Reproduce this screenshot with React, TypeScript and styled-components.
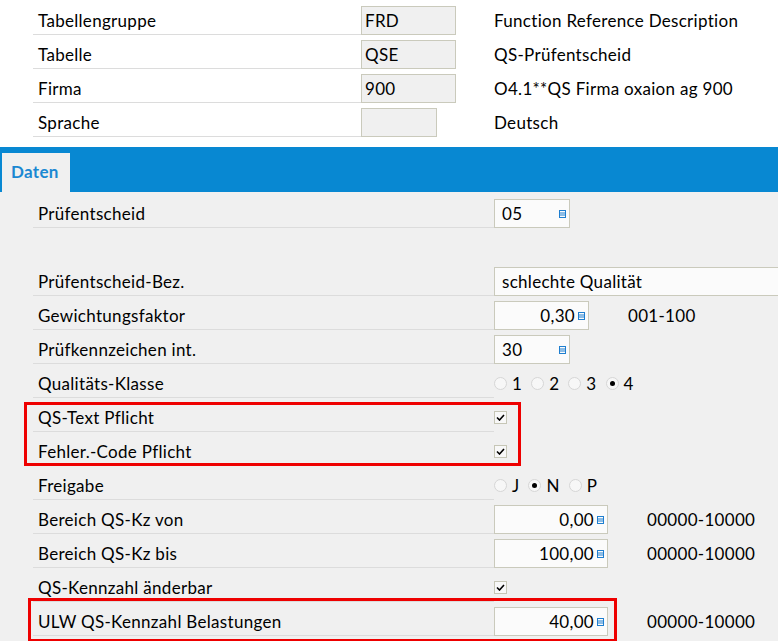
import React from 'react';
import styled, { createGlobalStyle } from 'styled-components';

// Styles
const GlobalStyle = createGlobalStyle`
  html, body {
    margin: 0;
    padding: 0;
    background: #f0f0f0;
    overflow: hidden;
  }
  body {
    font-family: Lato, "Open Sans", sans-serif;
    font-size: 17px;
    letter-spacing: 0.3px;
    color: #000;
  }
`;

const Page = styled.div`
  width: 778px;
  height: 641px;
  overflow: hidden;
`;

const Header = styled.div`
  background: #fff;
  padding: 1px 0 10px;
`;

const Row = styled.div`
  position: relative;
  display: flex;
  height: 34px;
`;

const Label = styled.div<{ $width: number; $plain?: boolean }>`
  box-sizing: border-box;
  width: ${({ $width }) => $width}px;
  flex: none;
  margin: 5px 0 0 33px;
  padding-left: 5px;
  display: flex;
  align-items: center;
  border-bottom: 1px solid ${({ $plain }) => ($plain ? 'transparent' : '#dcdcdc')};
`;

const Cell = styled.div<{ $width?: number }>`
  display: flex;
  align-items: center;
  padding-top: 5px;
  ${({ $width }) => ($width ? `width: ${$width}px; flex: none;` : '')}
`;

const Field = styled.div<{ $width: number; $light?: boolean; $right?: boolean }>`
  box-sizing: border-box;
  width: ${({ $width }) => $width}px;
  height: 29px;
  display: flex;
  align-items: center;
  justify-content: ${({ $right }) => ($right ? 'flex-end' : 'space-between')};
  gap: 3px;
  padding: ${({ $light }) => ($light ? '0 3px 0 7px' : '0 3px')};
  border: 1px solid #cacabc;
  background: ${({ $light }) => ($light ? '#fbfbfb' : '#f0f0f0')};
  white-space: nowrap;
  flex: none;
`;

const Extra = styled.span`
  margin-left: 39px;
  white-space: nowrap;
`;

const TabBar = styled.div`
  height: 45px;
  background: #0888d2;
  display: flex;
  align-items: flex-end;
  padding-left: 2px;
`;

const Tab = styled.div`
  width: 68px;
  height: 39px;
  box-sizing: border-box;
  background: #f0f0f0;
  color: #1a88d2;
  font-weight: bold;
  padding: 8px 0 0 9px;
`;

const Content = styled.div`
  padding-top: 2px;
`;

const Highlight = styled.div<{ $left: number; $width: number; $top: number; $bottom: number }>`
  position: relative;
  &::after {
    content: '';
    position: absolute;
    left: ${({ $left }) => $left}px;
    width: ${({ $width }) => $width}px;
    top: ${({ $top }) => $top}px;
    bottom: ${({ $bottom }) => $bottom}px;
    box-sizing: border-box;
    border: 3px solid #ee0000;
    pointer-events: none;
  }
`;

const RadioGroup = styled.div`
  display: flex;
  align-items: center;
  gap: 9px;
`;

const RadioItem = styled.label`
  display: flex;
  align-items: center;
  gap: 5px;
`;

const RadioCircle = styled.span<{ $on?: boolean }>`
  box-sizing: border-box;
  width: 13px;
  height: 13px;
  border-radius: 50%;
  border: 1px solid #d6d6d6;
  background: #f7f7f7;
  display: flex;
  align-items: center;
  justify-content: center;
  &::after {
    content: '';
    width: 5px;
    height: 5px;
    border-radius: 50%;
    background: ${({ $on }) => ($on ? '#000' : 'transparent')};
  }
`;

const CheckBox = styled.span`
  box-sizing: border-box;
  width: 13px;
  height: 13px;
  border: 1px solid #c6c6b6;
  background: #f8f8f8;
  display: flex;
  align-items: center;
  justify-content: center;
`;

const ListIcon = () => (
  <svg width="7" height="8" viewBox="0 0 7 8">
    <rect x="0.5" y="0.5" width="6" height="7" fill="none" stroke="#1f7fd0" />
    <line x1="0" y1="3" x2="7" y2="3" stroke="#1f7fd0" />
    <line x1="0" y1="5" x2="7" y2="5" stroke="#1f7fd0" />
  </svg>
);

const Check = () => (
  <CheckBox>
    <svg width="9" height="7" viewBox="0 0 9 7">
      <path d="M1 3.5 L3.5 6 L8 1" fill="none" stroke="#000" strokeWidth="1.6" />
    </svg>
  </CheckBox>
);

const Radios = ({ options, selected }: { options: string[]; selected: string }) => (
  <RadioGroup>
    {options.map((o) => (
      <RadioItem key={o}>
        <RadioCircle $on={o === selected} />
        {o}
      </RadioItem>
    ))}
  </RadioGroup>
);

// Types
interface HeadRow {
  label: string;
  value: string;
  width: number;
  text: string;
}

const headRows: HeadRow[] = [
  { label: 'Tabellengruppe', value: 'FRD', width: 95, text: 'Function Reference Description' },
  { label: 'Tabelle', value: 'QSE', width: 95, text: 'QS-Prüfentscheid' },
  { label: 'Firma', value: '900', width: 95, text: 'O4.1**QS Firma oxaion ag 900' },
  { label: 'Sprache', value: '', width: 76, text: 'Deutsch' },
];

const LABEL_W = 461;

const NumRow = ({ label, value, width, extra }: { label: string; value: string; width: number; extra?: string }) => (
  <Row>
    <Label $width={LABEL_W}>{label}</Label>
    <Cell>
      <Field $width={width} $light $right>
        {value}
        <ListIcon />
      </Field>
      {extra && <Extra>{extra}</Extra>}
    </Cell>
  </Row>
);

export default function App() {
  return (
    <Page>
      <GlobalStyle />
      <Header>
        {headRows.map((r) => (
          <Row key={r.label}>
            <Label $width={328}>{r.label}</Label>
            <Cell $width={133}>
              <Field $width={r.width}>{r.value}</Field>
            </Cell>
            <Cell>{r.text}</Cell>
          </Row>
        ))}
      </Header>
      <TabBar>
        <Tab>Daten</Tab>
      </TabBar>
      <Content>
        <Row>
          <Label $width={LABEL_W}>Prüfentscheid</Label>
          <Cell>
            <Field $width={76} $light>
              05
              <ListIcon />
            </Field>
          </Cell>
        </Row>
        <Row>
          <Label $width={LABEL_W} $plain />
        </Row>
        <Row>
          <Label $width={LABEL_W}>Prüfentscheid-Bez.</Label>
          <Cell>
            <Field $width={300} $light>
              schlechte Qualität
            </Field>
          </Cell>
        </Row>
        <NumRow label="Gewichtungsfaktor" value="0,30" width={95} extra="001-100" />
        <Row>
          <Label $width={LABEL_W}>Prüfkennzeichen int.</Label>
          <Cell>
            <Field $width={76} $light>
              30
              <ListIcon />
            </Field>
          </Cell>
        </Row>
        <Row>
          <Label $width={LABEL_W}>Qualitäts-Klasse</Label>
          <Cell>
            <Radios options={['1', '2', '3', '4']} selected="4" />
          </Cell>
        </Row>
        <Highlight $left={24} $width={497} $top={4} $bottom={0}>
          <Row>
            <Label $width={LABEL_W}>QS-Text Pflicht</Label>
            <Cell>
              <Check />
            </Cell>
          </Row>
          <Row>
            <Label $width={LABEL_W}>Fehler.-Code Pflicht</Label>
            <Cell>
              <Check />
            </Cell>
          </Row>
        </Highlight>
        <Row>
          <Label $width={LABEL_W}>Freigabe</Label>
          <Cell>
            <Radios options={['J', 'N', 'P']} selected="N" />
          </Cell>
        </Row>
        <NumRow label="Bereich QS-Kz von" value="0,00" width={114} extra="00000-10000" />
        <NumRow label="Bereich QS-Kz bis" value="100,00" width={114} extra="00000-10000" />
        <Row>
          <Label $width={LABEL_W}>QS-Kennzahl änderbar</Label>
          <Cell>
            <Check />
          </Cell>
        </Row>
        <Highlight $left={28} $width={589} $top={-4} $bottom={-6}>
          <NumRow label="ULW QS-Kennzahl Belastungen" value="40,00" width={114} extra="00000-10000" />
        </Highlight>
      </Content>
    </Page>
  );
}
